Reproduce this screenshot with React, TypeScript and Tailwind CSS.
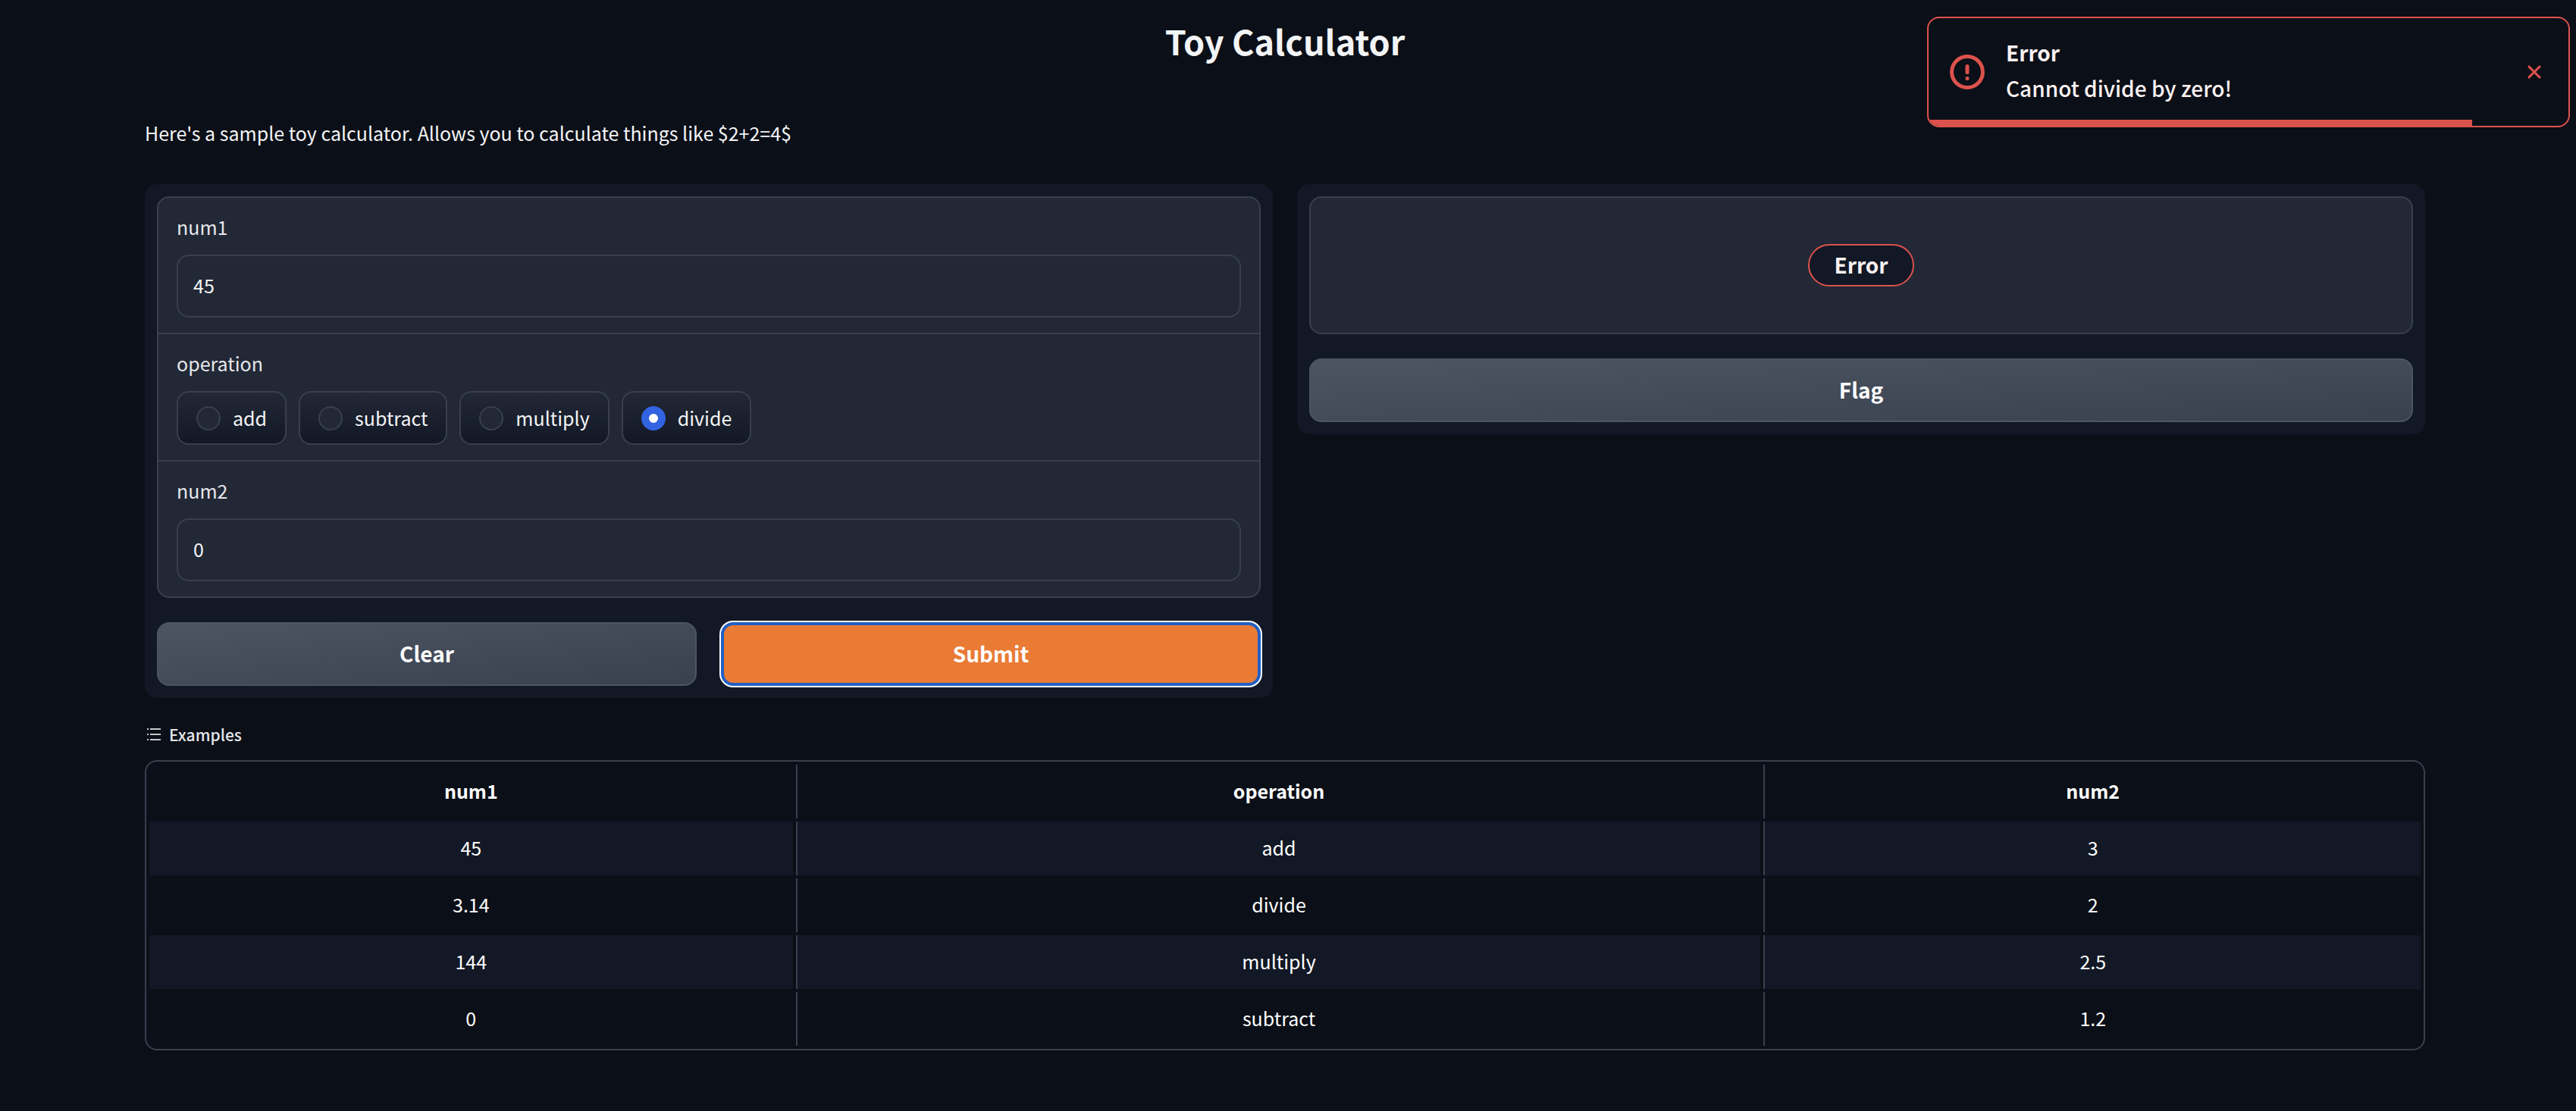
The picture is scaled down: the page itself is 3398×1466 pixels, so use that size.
import { useState } from "react";
import type { ReactNode } from "react";

const operations = ["add", "subtract", "multiply", "divide"];

const examples = [
  ["45", "add", "3"],
  ["3.14", "divide", "2"],
  ["144", "multiply", "2.5"],
  ["0", "subtract", "1.2"],
];

function Field({ id, value, onChange }: { id: string; value: string; onChange: (v: string) => void }) {
  return (
    <div className="flex flex-col gap-[19px] px-6 py-5">
      <label htmlFor={id} className="leading-9 text-gray-200">
        {id}
      </label>
      <input
        id={id}
        type="text"
        inputMode="decimal"
        value={value}
        onChange={(e) => onChange(e.target.value)}
        className="w-full rounded-2xl border-2 border-[#393f4e] bg-[#222835] px-5 pt-[19px] pb-[21px] leading-[39px] text-gray-100 outline-none"
      />
    </div>
  );
}

function SecondaryButton({ children }: { children: ReactNode }) {
  return (
    <button
      type="button"
      className="h-[84px] w-full rounded-2xl border-2 border-[#4d5462] bg-linear-to-br from-[#4d5562] to-[#394150] pb-0.5 text-[28px] font-bold text-white"
    >
      {children}
    </button>
  );
}

function Toast() {
  return (
    <div
      role="alert"
      className="absolute top-[22px] right-2 flex w-[848px] items-center overflow-hidden rounded-2xl border-2 border-[#dc524c] bg-[#0b0f17] py-[22px] pr-9 pl-[26px] text-[28px] leading-[47px] text-[#fbf2f2]"
    >
      <svg viewBox="0 0 24 24" className="size-[50px] shrink-0" fill="none" stroke="#dc524c" strokeWidth="2.4" strokeLinecap="round" strokeLinejoin="round" aria-hidden="true">
        <circle cx="12" cy="12" r="9.8" />
        <path d="M12 8.4v3.8M12 16.1h.01" />
      </svg>
      <div className="ml-[26px] flex-1 pb-1">
        <div className="font-bold">Error</div>
        <div className="font-medium">Cannot divide by zero!</div>
      </div>
      <button type="button" aria-label="Close" className="text-[#dc524c]">
        <svg viewBox="0 0 16 16" className="size-[18px]" fill="none" stroke="currentColor" strokeWidth="2.6" aria-hidden="true">
          <path d="M1 1l14 14M15 1L1 15" />
        </svg>
      </button>
      <div className="absolute bottom-0 left-0 h-2 w-[85%] bg-[#dc524c]" />
    </div>
  );
}

export default function App() {
  const [num1, setNum1] = useState("45");
  const [num2, setNum2] = useState("0");
  const [operation, setOperation] = useState("divide");

  return (
    <div className="relative min-h-screen bg-[#0b0f17] pr-[199px] pl-[191px] font-['Noto_Sans_CJK_SC',sans-serif] text-[25px] text-gray-100">
      <h1 className="pt-[18px] text-center text-[45px] leading-[72px] font-bold text-gray-100">Toy Calculator</h1>
      <p className="pt-16 leading-[42px]">Here's a sample toy calculator. Allows you to calculate things like $2+2=4$</p>

      <main className="mt-[47px] grid grid-cols-2 items-start gap-8">
        <form className="flex flex-col gap-8 rounded-2xl bg-[#121825] p-4" onSubmit={(e) => e.preventDefault()}>
          <div className="divide-y-2 divide-[#393f4e] overflow-hidden rounded-2xl border-2 border-[#393f4e] bg-[#222835]">
            <Field id="num1" value={num1} onChange={setNum1} />
            <fieldset className="px-6 py-5">
              <legend className="contents">
                <span className="block leading-9 text-gray-200">operation</span>
              </legend>
              <div className="mt-[19px] flex flex-wrap gap-4">
                {operations.map((name) => (
                  <label
                    key={name}
                    className="flex items-center gap-4 rounded-2xl border-2 border-[#393f4e] bg-linear-to-b from-[#222835] to-[#121825] px-6 py-[14px] leading-[39px] text-gray-100"
                  >
                    <input
                      type="radio"
                      name="operation"
                      checked={operation === name}
                      onChange={() => setOperation(name)}
                      className="size-8 appearance-none rounded-full border-2 border-[#393f4e] bg-[#222835] checked:border-[10px] checked:border-[#3264e2] checked:bg-white"
                    />
                    {name}
                  </label>
                ))}
              </div>
            </fieldset>
            <Field id="num2" value={num2} onChange={setNum2} />
          </div>
          <div className="grid grid-cols-2 gap-8">
            <SecondaryButton>Clear</SecondaryButton>
            <button
              type="submit"
              className="h-[84px] rounded-2xl border-4 border-[#2160c4] bg-[#e97b35] pb-0.5 text-[28px] font-bold text-white ring-2 ring-white outline-none"
            >
              Submit
            </button>
          </div>
        </form>

        <section className="flex flex-col gap-8 rounded-2xl bg-[#121825] p-4">
          <div className="flex h-[182px] items-center justify-center rounded-2xl border-2 border-[#393f4e] bg-[#222835]">
            <span className="rounded-full border-2 border-[#dc524c] bg-[#121825] px-8 pb-0.5 text-[28px] leading-[50px] font-bold text-[#fbf2f2]">
              Error
            </span>
          </div>
          <SecondaryButton>Flag</SecondaryButton>
        </section>
      </main>

      <section className="mt-8 pb-20">
        <h2 className="flex items-center gap-2 text-[21px] leading-8 font-medium text-gray-200">
          <svg viewBox="0 0 24 20" className="h-5 w-6" fill="currentColor" aria-hidden="true">
            <path d="M3 2h2v2H3zM7 2h14v2H7zM3 9h2v2H3zM7 9h14v2H7zM3 16h2v2H3zM7 16h14v2H7z" opacity="0.85" />
          </svg>
          Examples
        </h2>
        <div className="mt-[18px] rounded-2xl border-2 border-[#393f4e]">
          <table className="w-full table-fixed border-separate border-spacing-1 text-center leading-[39px] text-white">
            <colgroup>
              <col className="w-[28.4%]" />
              <col className="w-[42.6%]" />
              <col className="w-[29%]" />
            </colgroup>
            <thead>
              <tr>
                {["num1", "operation", "num2"].map((name) => (
                  <th key={name} className="border-[#393f4e] pt-[15px] pb-[17px] font-bold not-first:border-l-2">
                    {name}
                  </th>
                ))}
              </tr>
            </thead>
            <tbody>
              {examples.map((row) => (
                <tr key={row.join()} className="odd:bg-[#121825]">
                  {row.map((cell) => (
                    <td key={cell} className="border-[#393f4e] pt-[15px] pb-[17px] not-first:border-l-2">
                      {cell}
                    </td>
                  ))}
                </tr>
              ))}
            </tbody>
          </table>
        </div>
      </section>
      <Toast />
    </div>
  );
}
